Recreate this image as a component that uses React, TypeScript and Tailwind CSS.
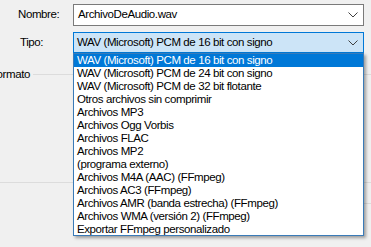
import React from "react";

const items = [
  "WAV (Microsoft) PCM de 16 bit con signo",
  "WAV (Microsoft) PCM de 24 bit con signo",
  "WAV (Microsoft) PCM de 32 bit flotante",
  "Otros archivos sin comprimir",
  "Archivos MP3",
  "Archivos Ogg Vorbis",
  "Archivos FLAC",
  "Archivos MP2",
  "(programa externo)",
  "Archivos M4A (AAC) (FFmpeg)",
  "Archivos AC3 (FFmpeg)",
  "Archivos AMR (banda estrecha) (FFmpeg)",
  "Archivos WMA (versión 2) (FFmpeg)",
  "Exportar FFmpeg personalizado",
];

function Chevron() {
  return (
    <svg width="10" height="6" viewBox="0 0 10 6" className="shrink-0">
      <polyline points="0.5,0.5 5,5 9.5,0.5" fill="none" stroke="#404040" strokeWidth="1" />
    </svg>
  );
}

export default function App() {
  return (
    <div
      className="relative w-[371px] h-[247px] overflow-hidden bg-[#f0f0f0] text-[11.5px] tracking-[-0.4px] text-black"
      style={{ fontFamily: '"Liberation Sans", Arial, sans-serif' }}
    >
      <div className="flex flex-col pt-[4px] pr-[7px]">
        <div className="flex items-center h-[22px]">
          <span className="w-[73px] pl-[18px]">Nombre:</span>
          <div className="flex-1 h-[22px] flex items-center justify-between bg-white border border-[#7a7a7a] pl-[4px] pr-[5px]">
            <span>ArchivoDeAudio.wav</span>
            <Chevron />
          </div>
        </div>
        <div className="flex items-center h-[21px] mt-[6px]">
          <span className="w-[73px] pl-[20px]">Tipo:</span>
          <div className="flex-1 h-[21px] flex items-center justify-between bg-[#cce4f7] border border-[#0078d7] pl-[3px] pr-[5px]">
            <span>WAV (Microsoft) PCM de 16 bit con signo</span>
            <Chevron />
          </div>
        </div>
      </div>

      {/* grupo Formato */}
      <div className="mt-[21px] ml-[-10px] h-[109px] border-b border-[#dcdcdc] flex">
        <div className="flex items-start">
          <span className="-mt-[7px] leading-[14px] pl-[0px] pr-[3px]">Formato</span>
        </div>
        <div className="flex-1 border-t border-[#dcdcdc]" />
      </div>
      <div className="ml-[364px] mt-[20px] border-t border-[#dcdcdc]" />

      {/* lista desplegable */}
      <div className="absolute left-[73px] top-[53px] w-[291px] h-[183px] bg-white border border-[#3a7bb8] shadow-[2px_2px_3px_rgba(0,0,0,0.35)] flex flex-col">
        {items.map((t, i) => (
          <div
            key={t}
            className={
              i === 0
                ? "h-[13px] leading-[13px] pl-[3px] bg-[#0078d7] text-white whitespace-nowrap"
                : "h-[13px] leading-[13px] pl-[3px] whitespace-nowrap"
            }
          >
            {t}
          </div>
        ))}
      </div>
    </div>
  );
}
